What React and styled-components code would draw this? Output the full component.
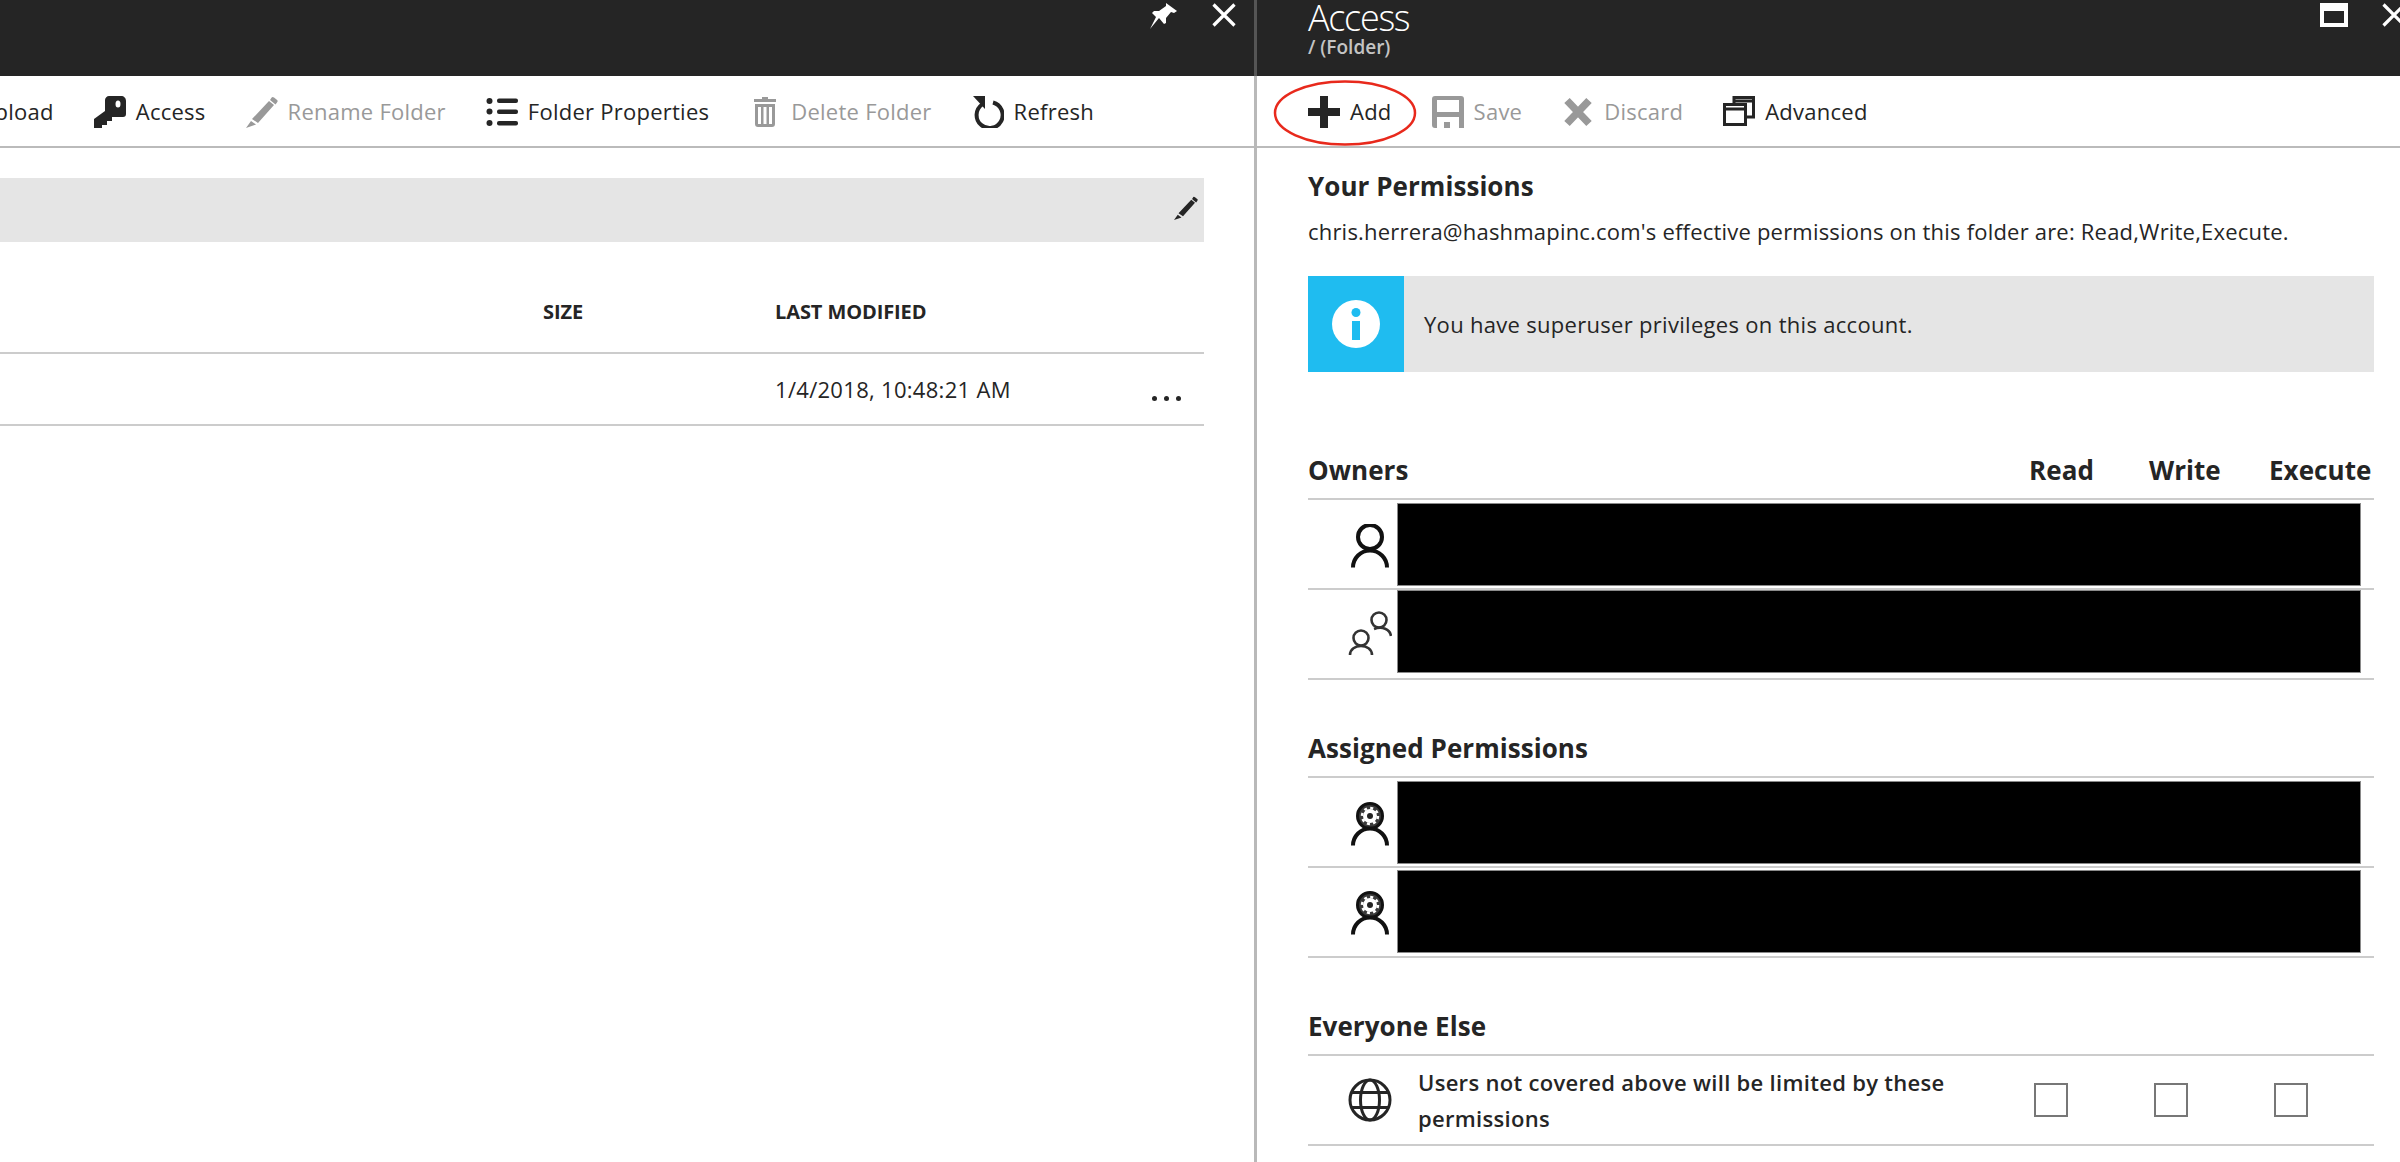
import styled, { createGlobalStyle } from 'styled-components';

const GlobalStyle = createGlobalStyle`
  html, body {
    margin: 0;
    height: 1162px;
    overflow: hidden;
    background: #fff;
    font-family: "Open Sans", "Noto Sans", sans-serif;
    color: #252525;
  }
`;

const Page = styled.div`
  display: flex;
  width: 2400px;
  height: 1162px;
  overflow: hidden;
`;

const LeftBlade = styled.section`
  flex: 0 0 1254px;
  width: 1254px;
  overflow: hidden;
`;

const RightBlade = styled.section`
  position: relative;
  flex: 1;
  min-width: 0;
  border-left: 3px solid #b9b9b9;
`;

const Header = styled.header`
  display: flex;
  align-items: flex-start;
  height: 76px;
  background: #252525;
  color: #fff;
  padding: ${(p) => (p.$right ? '0 0 0 51px' : '0 18px 0 0')};
  box-sizing: border-box;
  justify-content: ${(p) => (p.$right ? 'flex-start' : 'flex-end')};
  box-shadow: ${(p) => (p.$right ? '-3px 0 0 #555' : 'none')};
`;

const TitleStack = styled.div`
  display: flex;
  flex-direction: column;
  flex: 1;
`;

const Title = styled.h1`
  margin: 1px 0 0;
  font-size: 36px;
  font-weight: 300;
  line-height: 34px;
  letter-spacing: -1.3px;
`;

const Subtitle = styled.div`
  font-size: 19px;
  font-weight: 600;
  line-height: 24px;
  color: #c4c4c4;
`;

const HeaderIcons = styled.div`
  display: flex;
  align-items: flex-start;
  gap: ${(p) => p.$gap}px;
  padding-top: 3px;
  margin-right: ${(p) => p.$end}px;
`;

const Toolbar = styled.nav`
  display: flex;
  align-items: center;
  gap: 40px;
  height: 72px;
  box-sizing: border-box;
  border-bottom: 2px solid #bbb;
  padding: ${(p) => (p.$right ? '2px 0 0 51px' : '2px 160px 0 0')};
  justify-content: ${(p) => (p.$right ? 'flex-start' : 'flex-end')};
`;

const ToolButton = styled.button`
  display: flex;
  align-items: center;
  flex: none;
  gap: 10px;
  padding: 0;
  border: 0;
  background: none;
  font: 400 22px/32px "Open Sans", "Noto Sans", sans-serif;
  letter-spacing: 0.25px;
  white-space: nowrap;
  color: ${(p) => (p.$off ? '#999' : '#252525')};
`;

const ToolLabel = styled.span`
  margin-top: -2px;
`;

const AddCircle = styled.svg`
  position: absolute;
  left: 16px;
  top: 79px;
  pointer-events: none;
`;

const FolderContent = styled.div`
  padding: 30px 50px 0 0;
`;

const PathBar = styled.div`
  display: flex;
  align-items: center;
  justify-content: flex-end;
  height: 64px;
  padding-right: 6px;
  padding-bottom: 4px;
  box-sizing: border-box;
  background: #e5e5e5;
`;

const FileRow = styled.div`
  display: grid;
  grid-template-columns: 543px 232px 1fr 52px;
  align-items: center;
  height: ${(p) => p.$height}px;
  padding-top: ${(p) => p.$top || 0}px;
  box-sizing: border-box;
  border-bottom: 2px solid #ccc;
`;

const ColumnHead = styled.div`
  font-size: 20px;
  font-weight: 700;
  letter-spacing: -0.1px;
`;

const Cell = styled.div`
  font-size: 22px;
  font-weight: 400;
  letter-spacing: 0.3px;
`;

const Dots = styled.div`
  display: flex;
  gap: 7px;
  padding-top: 18px;
`;

const Dot = styled.span`
  width: 5px;
  height: 5px;
  border-radius: 50%;
  background: #252525;
`;

const PermissionBody = styled.div`
  padding: 22px 26px 0 51px;
`;

const Heading = styled.h2`
  margin: 0;
  font-size: 26px;
  font-weight: 700;
  line-height: 32px;
  letter-spacing: 0.05px;
`;

const Line = styled.p`
  margin: 13px 0 0;
  font-size: 22px;
  line-height: 32px;
  letter-spacing: 0.2px;
`;

const InfoBox = styled.div`
  display: flex;
  align-items: center;
  height: 96px;
  margin-top: 29px;
  background: #e5e5e5;
  font-size: 22px;
  letter-spacing: 0.3px;
`;

const InfoBadge = styled.div`
  display: flex;
  align-items: center;
  justify-content: center;
  width: 96px;
  height: 100%;
  margin-right: 20px;
  background: #1fbcf0;
`;

const Columns = styled.div`
  display: grid;
  grid-template-columns: 1fr 120px 120px 105px;
  padding-bottom: 12px;
  margin-top: ${(p) => p.$top}px;
  border-bottom: 2px solid #ccc;
`;

const PersonRow = styled.div`
  display: grid;
  grid-template-columns: 89px 964px;
  align-items: start;
  height: 90px;
  box-sizing: border-box;
  padding-top: ${(p) => p.$pad}px;
  border-bottom: 2px solid #ccc;
`;

const IconCell = styled.div`
  display: flex;
  align-items: center;
  height: 86px;
  padding-left: 40px;
`;

const Redacted = styled.div`
  height: 83px;
  box-sizing: border-box;
  background: #000;
  border: 1px solid #8a8a8a;
`;

const EveryoneRow = styled.div`
  display: grid;
  grid-template-columns: 89px 1fr 120px 120px 105px;
  align-items: center;
  height: 90px;
  box-sizing: border-box;
  border-bottom: 2px solid #ccc;
`;

const EveryoneIcon = styled.div`
  display: flex;
  padding-left: 40px;
`;

const EveryoneText = styled.div`
  padding-left: 21px;
  font-size: 22px;
  font-weight: 600;
  line-height: 36px;
  letter-spacing: 0.3px;
  width: 540px;
`;

const CheckBox = styled.span`
  display: block;
  width: 34px;
  height: 34px;
  margin-left: 5px;
  box-sizing: border-box;
  border: 2px solid #777;
`;

const Svg = styled.svg`
  display: block;
  flex: none;
`;

const KeyIcon = () => (
  <Svg width="32" height="32" viewBox="0 0 32 32" fill="#252525">
    <path d="M15 0h12c3 0 5 2 5 5v13c0 2-1 3-3 3H18v4h-5v4H8v3H0v-9l11-8V4c0-2 2-4 4-4z" />
    <ellipse cx="24" cy="8" rx="2.500" ry="3.500" fill="#fff" />
  </Svg>
);

const PencilIcon = ({ size = 32, color = '#999' }) => (
  <Svg width={size} height={size} viewBox="0 0 32 32" fill={color}>
    <path d="M23 5l5 4-16 18-6-4zM25 2.500a2 2 0 0 1 3-1l2.500 2a2 2 0 0 1 .5 3l-1.500 2-5.500-4.500zM5 25l5 3.500L0 32z" />
  </Svg>
);

const ListIcon = () => (
  <Svg width="32" height="32" viewBox="0 0 32 32" fill="#252525">
    <circle cx="3.500" cy="5" r="3" />
    <circle cx="3.500" cy="15.500" r="3" />
    <circle cx="3.500" cy="27" r="3" />
    <rect x="11" y="2.500" width="21" height="4.500" rx="2" />
    <rect x="11" y="13.500" width="21" height="4.500" rx="2" />
    <rect x="11" y="25" width="21" height="4.500" rx="2" />
  </Svg>
);

const TrashIcon = () => (
  <Svg width="32" height="32" viewBox="0 0 32 32" fill="#999">
    <path fillRule="evenodd" d="M13 0h6v2h8v3H5V2h8zM6 7h20v20c0 2-1 3-3 3H9c-2 0-3-1-3-3zm3 3v17h3V10zm5.500 0v17h3V10zM20 10v17h3V10z" transform="translate(0 1)" />
  </Svg>
);

const RefreshIcon = () => (
  <Svg width="32" height="32" viewBox="0 0 32 32" fill="none">
    <path d="M10 8.500A13 13 0 1 0 21 6.500" stroke="#252525" strokeWidth="4" />
    <path d="M0 0h12v13z" fill="#252525" transform="translate(1 0)" />
  </Svg>
);

const PinIcon = () => (
  <Svg width="28" height="26" viewBox="0 0 28 26" fill="#fff">
    <path d="M16 0l11 8-3 2-3-1-5 6 0 5-2 1-5-6-9 11 6-12-4-4 2-2h5l7-5z" />
  </Svg>
);

const CloseIcon = () => (
  <Svg width="24" height="24" viewBox="0 0 24 24">
    <path d="M1.500 1.500l21 21M22.500 1.500l-21 21" stroke="#fff" strokeWidth="3.200" />
  </Svg>
);

const MaximizeIcon = () => (
  <Svg width="28" height="24" viewBox="0 0 28 24">
    <path fillRule="evenodd" fill="#fff" d="M0 0h28v24H0zM4 8v12h20V8z" />
  </Svg>
);

const PlusIcon = () => (
  <Svg width="32" height="32" viewBox="0 0 32 32" fill="#252525">
    <path d="M12 0h8v12h12v8H20v12h-8V20H0v-8h12z" />
  </Svg>
);

const SaveIcon = () => (
  <Svg width="32" height="32" viewBox="0 0 32 32" fill="#999">
    <path fillRule="evenodd" d="M3 0h26c2 0 3 1 3 3v29h-5V21H5v11H3c-2 0-3-1-3-3V3c0-2 1-3 3-3zm2 4v12h22V4z" />
    <rect x="12" y="26" width="6" height="6" />
  </Svg>
);

const DiscardIcon = () => (
  <Svg width="32" height="32" viewBox="0 0 32 32">
    <path d="M5 4.500l22 23M27 4.500l-22 23" stroke="#999" strokeWidth="7.500" />
  </Svg>
);

const AdvancedIcon = () => (
  <Svg width="32" height="32" viewBox="0 0 32 32" fill="none" stroke="#252525" strokeWidth="3">
    <path d="M11 7V1.500h19.500V21H23" />
    <rect x="1.500" y="8.500" width="21" height="20" />
    <path d="M2 13h20M11 5h19" strokeWidth="3" />
  </Svg>
);

const PersonIcon = () => (
  <Svg width="44" height="44" viewBox="0 0 44 44" fill="none" stroke="#111" strokeWidth="4">
    <circle cx="22" cy="13" r="12" />
    <path d="M5 43.500a17 17 0 0 1 34 0" />
  </Svg>
);

const GroupIcon = () => (
  <Svg width="44" height="44" viewBox="0 0 44 44" fill="none" stroke="#333" strokeWidth="2.600">
    <circle cx="31" cy="9" r="7.500" />
    <path d="M26 18c8-3 16 0 17 7" />
    <circle cx="13" cy="27" r="7.500" />
    <path d="M2 44c0-12 22-12 22 0" />
  </Svg>
);

const AdminIcon = () => (
  <Svg width="44" height="44" viewBox="0 0 44 44" fill="none">
    <circle cx="22" cy="14" r="12.500" fill="#3a3a3a" stroke="#111" strokeWidth="3" />
    <circle cx="22" cy="14" r="7" fill="#fff" />
    <circle cx="22" cy="14" r="8" stroke="#fff" strokeWidth="2.500" strokeDasharray="3 3.280" />
    <circle cx="22" cy="14" r="3" fill="#222" />
    <path d="M5 43.500a17 17 0 0 1 34 0" stroke="#111" strokeWidth="4" />
  </Svg>
);

const GlobeIcon = () => (
  <Svg width="44" height="44" viewBox="0 0 44 44" fill="none" stroke="#252525" strokeWidth="3">
    <circle cx="22" cy="22" r="20" />
    <ellipse cx="22" cy="22" rx="9.500" ry="20" />
    <path d="M4 14.500h36M4 29.500h36" />
  </Svg>
);

const InfoIcon = () => (
  <Svg width="48" height="48" viewBox="0 0 48 48">
    <circle cx="24" cy="24" r="24" fill="#fff" />
    <circle cx="24" cy="12.500" r="4.500" fill="#1fbcf0" />
    <rect x="20" y="21" width="8" height="19" fill="#1fbcf0" />
  </Svg>
);

const leftTools = [
  { label: 'Upload', icon: null },
  { label: 'Access', icon: <KeyIcon /> },
  { label: 'Rename Folder', icon: <PencilIcon />, off: true },
  { label: 'Folder Properties', icon: <ListIcon /> },
  { label: 'Delete Folder', icon: <TrashIcon />, off: true },
  { label: 'Refresh', icon: <RefreshIcon /> },
];

const rightTools = [
  { label: 'Add', icon: <PlusIcon /> },
  { label: 'Save', icon: <SaveIcon />, off: true },
  { label: 'Discard', icon: <DiscardIcon />, off: true },
  { label: 'Advanced', icon: <AdvancedIcon /> },
];

const renderTools = (tools) =>
  tools.map((tool) => (
    <ToolButton key={tool.label} $off={tool.off}>
      {tool.icon}
      <ToolLabel>{tool.label}</ToolLabel>
    </ToolButton>
  ));

export default function App() {
  return (
    <Page>
      <GlobalStyle />
      <LeftBlade>
        <Header>
          <HeaderIcons $gap={34} $end={0}>
            <PinIcon />
            <CloseIcon />
          </HeaderIcons>
        </Header>
        <Toolbar>{renderTools(leftTools)}</Toolbar>
        <FolderContent>
          <PathBar>
            <PencilIcon size={24} color="#252525" />
          </PathBar>
          <FileRow $height={112} $top={28}>
            <span />
            <ColumnHead>SIZE</ColumnHead>
            <ColumnHead>LAST MODIFIED</ColumnHead>
          </FileRow>
          <FileRow $height={72}>
            <span />
            <span />
            <Cell>1/4/2018, 10:48:21 AM</Cell>
            <Dots>
              <Dot />
              <Dot />
              <Dot />
            </Dots>
          </FileRow>
        </FolderContent>
      </LeftBlade>
      <RightBlade>
        <Header $right>
          <TitleStack>
            <Title>Access</Title>
            <Subtitle>/ (Folder)</Subtitle>
          </TitleStack>
          <HeaderIcons $gap={34} $end={-6}>
            <MaximizeIcon />
            <CloseIcon />
          </HeaderIcons>
        </Header>
        <Toolbar $right>{renderTools(rightTools)}</Toolbar>
        <AddCircle width="144" height="68" viewBox="0 0 144 68" fill="none">
          <ellipse cx="72" cy="34" rx="70" ry="31.500" stroke="#e8291c" strokeWidth="2.500" />
        </AddCircle>
        <PermissionBody>
          <Heading>Your Permissions</Heading>
          <Line>chris.herrera@hashmapinc.com's effective permissions on this folder are: Read,Write,Execute.</Line>
          <InfoBox>
            <InfoBadge>
              <InfoIcon />
            </InfoBadge>
            You have superuser privileges on this account.
          </InfoBox>

          <Columns $top={82}>
            <Heading>Owners</Heading>
            <Heading>Read</Heading>
            <Heading>Write</Heading>
            <Heading>Execute</Heading>
          </Columns>
          <PersonRow $pad={3}>
            <IconCell>
              <PersonIcon />
            </IconCell>
            <Redacted />
          </PersonRow>
          <PersonRow $pad={0}>
            <IconCell>
              <GroupIcon />
            </IconCell>
            <Redacted />
          </PersonRow>

          <Columns $top={52}>
            <Heading>Assigned Permissions</Heading>
          </Columns>
          <PersonRow $pad={3}>
            <IconCell>
              <AdminIcon />
            </IconCell>
            <Redacted />
          </PersonRow>
          <PersonRow $pad={2}>
            <IconCell>
              <AdminIcon />
            </IconCell>
            <Redacted />
          </PersonRow>

          <Columns $top={52}>
            <Heading>Everyone Else</Heading>
          </Columns>
          <EveryoneRow>
            <EveryoneIcon>
              <GlobeIcon />
            </EveryoneIcon>
            <EveryoneText>Users not covered above will be limited by these permissions</EveryoneText>
            <CheckBox />
            <CheckBox />
            <CheckBox />
          </EveryoneRow>
        </PermissionBody>
      </RightBlade>
    </Page>
  );
}
